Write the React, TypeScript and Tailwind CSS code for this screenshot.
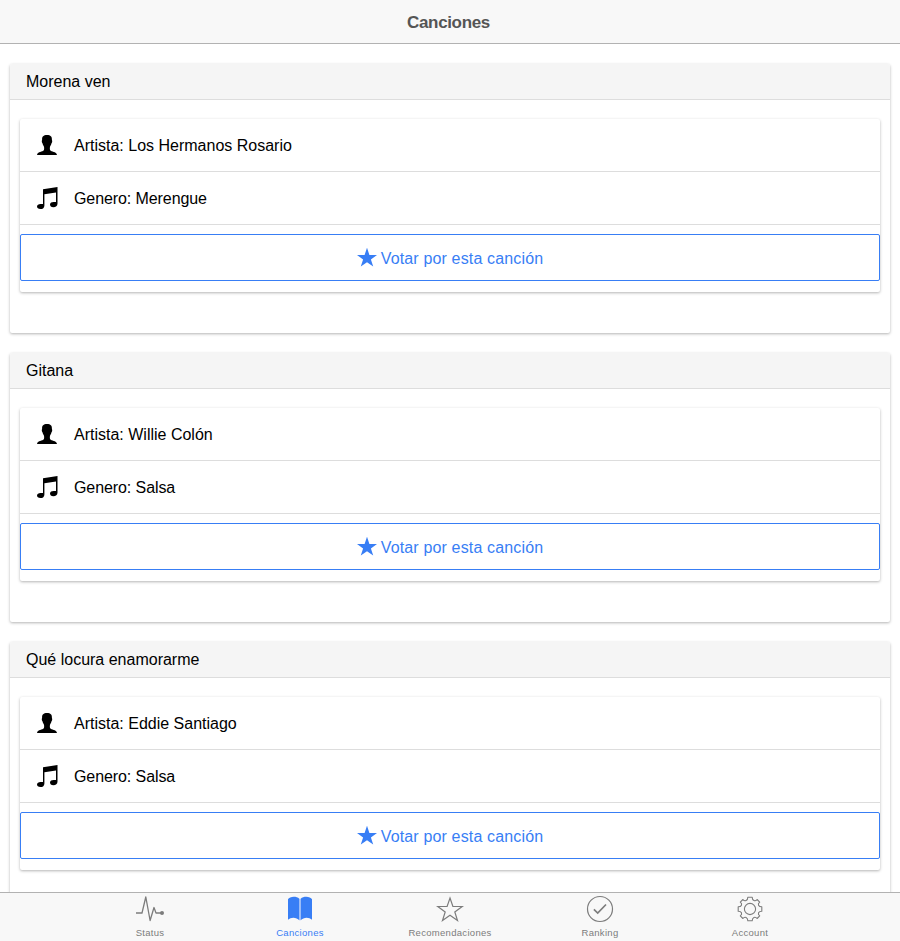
import type { ReactNode } from 'react';

type Song = { title: string; artist: string; genre: string };

const songs: Song[] = [
  { title: 'Morena ven', artist: 'Los Hermanos Rosario', genre: 'Merengue' },
  { title: 'Gitana', artist: 'Willie Colón', genre: 'Salsa' },
  { title: 'Qué locura enamorarme', artist: 'Eddie Santiago', genre: 'Salsa' },
];

const PersonIcon = () => (
  <svg className="h-5 w-5" viewBox="0 0 20 20" fill="currentColor">
    <path d="M10 0C6.4 0 5 1.6 5.1 4.4C5.1 5.2 4.7 5.4 4.8 6.4C4.9 7.5 5.4 7.7 5.6 8.6C5.8 10 6.6 10.9 7 11.8C7.2 13 7.3 14.4 6.8 15.3C5.8 16.8 .5 16.6 0 20H20C19.5 16.6 14.2 16.8 13.2 15.3C12.7 14.4 12.8 13 13 11.8C13.4 10.9 14.2 10 14.4 8.6C14.6 7.7 15.1 7.5 15.2 6.4C15.3 5.4 14.9 5.2 14.9 4.4C15 1.6 13.6 0 10 0Z" />
  </svg>
);

const NotesIcon = () => (
  <svg className="h-[22px] w-[21px]" viewBox="0 0 21 22" fill="currentColor">
    <path d="M6 2.2L20.5 0V16.4C20.5 18.9 18.8 20.2 16.4 20.2C14.1 20.2 13 19.2 13 17.6C13 15.8 14.6 15 16.6 15H19V5.4L7.4 7.2V18.4C7.4 20.9 5.8 22 3.5 22C1.2 22 0 21.1 0 19.5C0 17.7 1.5 16.9 3.5 16.9H6Z" />
  </svg>
);

const StarIcon = () => (
  <svg className="h-5 w-5" viewBox="0 0 20 20" fill="currentColor">
    <path d="M10 -.3L12.4 7H20L13.9 11.4L16.2 18.6L10 14.2L3.8 18.6L6.1 11.4L0 7H7.6Z" />
  </svg>
);

const PulseIcon = () => (
  <svg className="h-7 w-7" viewBox="0 0 28 28" fill="none" stroke="currentColor" strokeWidth="1.3" strokeLinejoin="round">
    <path d="M0 18H6L9.8 2L14.1 25.5L18 12.5L20 18H25" />
    <circle cx="26" cy="18" r="2" fill="currentColor" stroke="none" />
  </svg>
);

const BookIcon = () => (
  <svg className="h-7 w-7" viewBox="0 0 28 28" fill="currentColor">
    <path d="M2 4.2C3.5 1.4 10.5 .8 13.3 3.8V25.3C10.5 22 4.8 22 2 24.8Z" />
    <path d="M26 4.2C24.5 1.4 17.5 .8 14.7 3.8V25.3C17.5 22 23.2 22 26 24.8Z" />
    <path d="M13.3 3.8H14.7V25.3H13.3Z" opacity=".35" />
  </svg>
);

const StarOutlineIcon = () => (
  <svg className="h-7 w-7" viewBox="0 0 28 28" fill="none" stroke="currentColor" strokeWidth="1.2">
    <path d="M14 3L16.9 11.5H26.2L18.8 16.9L21.5 25.5L14 20.3L6.5 25.5L9.2 16.9L1.8 11.5H11.1Z" />
  </svg>
);

const CheckIcon = () => (
  <svg className="h-7 w-7" viewBox="0 0 28 28" fill="none" stroke="currentColor">
    <circle cx="14" cy="14" r="12.5" strokeWidth="1.2" />
    <path d="M7.9 14.3L11.7 18L20 9.5" strokeWidth="1.7" />
  </svg>
);

const GearIcon = () => (
  <svg className="h-7 w-7" viewBox="0 0 28 28" fill="none" stroke="currentColor" strokeWidth="1.1" strokeLinejoin="round">
    <circle cx="14" cy="14" r="5.6" />
    <path d="M11.8 2.2H16.2C16.2 5.7 19.2 6.9 21.1 4.5L23.7 7.1C21.2 9 22.4 11.8 25.8 11.8V16.2C22.4 16.2 21.2 19 23.7 20.9L21.1 23.5C19.2 21.1 16.2 22.3 16.2 25.8H11.8C11.8 22.3 8.8 21.1 6.9 23.5L4.3 20.9C6.8 19 5.6 16.2 2.2 16.2V11.8C5.6 11.8 6.8 9 4.3 7.1L6.9 4.5C8.8 6.9 11.8 5.7 11.8 2.2Z" />
  </svg>
);

const Row = ({ icon, children }: { icon: ReactNode; children: ReactNode }) => (
  <div className="flex h-[53px] items-center border-b border-[#ddd] pl-[17px]">
    <span className="flex w-[37px] shrink-0">{icon}</span>
    <span className="pt-[2px] leading-5">{children}</span>
  </div>
);

const SongCard = ({ song }: { song: Song }) => (
  <section className="h-[269px] shrink-0 rounded-[2px] bg-white shadow-[0_1px_3px_rgba(0,0,0,0.3)]">
    <h2 className="flex h-9 items-center rounded-t-[2px] border-b border-[#ddd] bg-[#f5f5f5] px-4">{song.title}</h2>
    <div className="mx-[10px] mt-[19px] h-[173px] rounded-[2px] bg-white shadow-[0_1px_3px_rgba(0,0,0,0.3)]">
      <Row icon={<PersonIcon />}>Artista: {song.artist}</Row>
      <Row icon={<NotesIcon />}>
        <span className="tracking-[-0.09px]">Genero: {song.genre}</span>
      </Row>
      <button className="mt-[9px] flex h-[47px] w-full items-center justify-center gap-1 rounded-[2px] border border-[#387ef5] text-[#387ef5]">
        <StarIcon />
        <span className="pt-[2px] tracking-[0.15px]">Votar por esta canción</span>
      </button>
    </div>
  </section>
);

const tabs = [
  { label: 'Status', icon: <PulseIcon />, active: false },
  { label: 'Canciones', icon: <BookIcon />, active: true },
  { label: 'Recomendaciones', icon: <StarOutlineIcon />, active: false },
  { label: 'Ranking', icon: <CheckIcon />, active: false },
  { label: 'Account', icon: <GearIcon />, active: false },
];

export default function App() {
  return (
    <div className="flex h-[941px] w-full flex-col overflow-hidden bg-white font-['Helvetica_Neue','Liberation_Sans',Arial,sans-serif] text-base text-black">
      <header className="flex h-11 shrink-0 items-center justify-center border-b border-[#b2b2b2] bg-[#f8f8f8]">
        <h1 className="pt-[2px] pr-[3px] text-[17px] font-bold tracking-[-0.35px] text-[#555]">Canciones</h1>
      </header>
      <main className="flex min-h-0 flex-1 flex-col gap-5 overflow-hidden px-[10px] pt-5">
        {songs.map((song) => (
          <SongCard key={song.title} song={song} />
        ))}
      </main>
      <nav className="flex h-[49px] shrink-0 justify-center border-t border-[#b2b2b2] bg-[#f8f8f8]">
        {tabs.map((tab) => (
          <a
            key={tab.label}
            className={
              tab.active
                ? 'flex w-[150px] flex-col items-center pt-[2px] text-[#387ef5]'
                : 'flex w-[150px] flex-col items-center pt-[2px] text-[#7c7c7c]'
            }
          >
            {tab.icon}
            <span className="mt-[3px] text-[9.5px] leading-[14px] tracking-[0.3px]">{tab.label}</span>
          </a>
        ))}
      </nav>
    </div>
  );
}
